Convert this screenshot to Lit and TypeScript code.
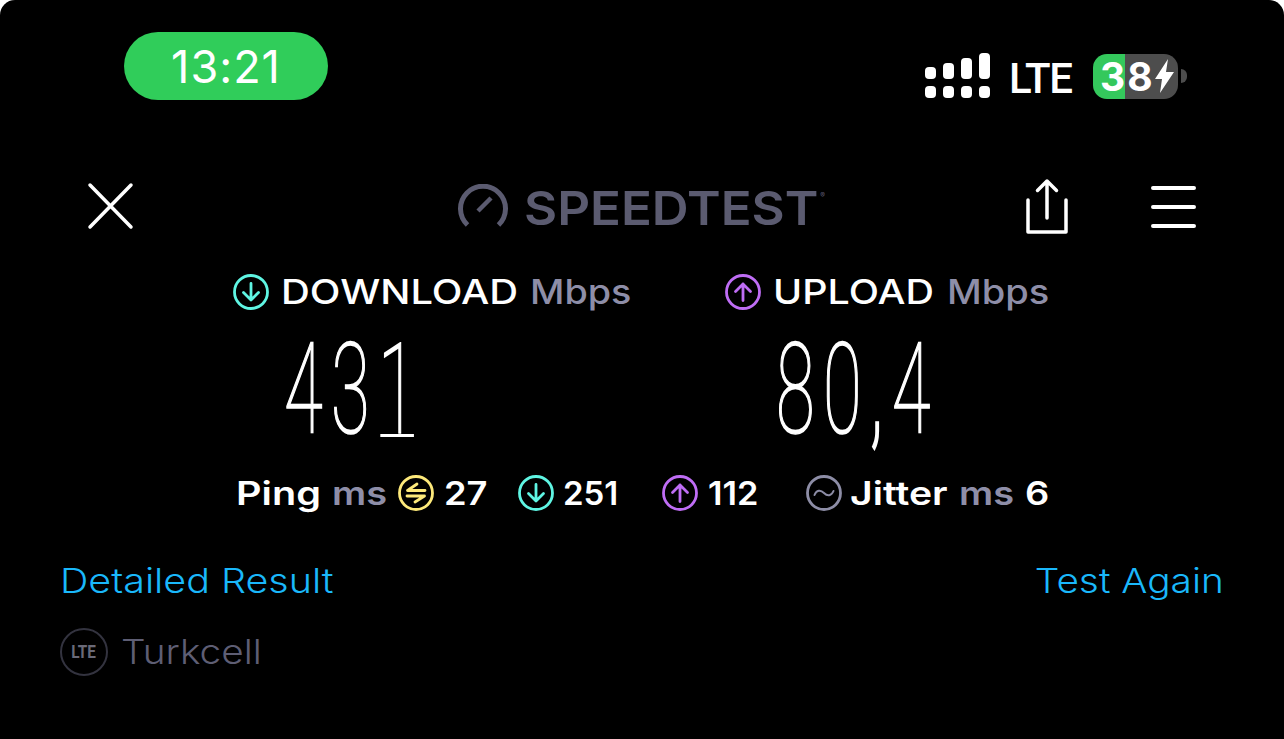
import { LitElement, html, css, svg } from "lit";
import { customElement } from "lit/decorators.js";

const circleIcon = (color: string, inner: unknown) => html`<svg class="ci" viewBox="0 0 36 36" fill="none" stroke=${color} stroke-width="2.8" stroke-linecap="round" stroke-linejoin="round"><circle cx="18" cy="18" r="16.5"></circle>${inner}</svg>`;
const down = svg`<path d="M18 9.500V26M10.500 18.500 18 26l7.500-7.500"></path>`;
const up = svg`<path d="M18 26.500V10M10.500 17.500 18 10l7.500 7.500"></path>`;
const ping = svg`<path d="M27 15.500H9.500L19 9M9 21h17.500L17 27"></path>`;
const wave = svg`<path stroke-width="2" d="M8.500 20c2-5 6-5.500 9.500-2s7.500 3 9.500-2"></path>`;

/* Montserrat is not installed: each label is Inter stretched to the measured width. */
interface Item { x: number; w: number; t?: string; s?: number; dim?: boolean; icon?: unknown; }
const statItems: Item[] = [
  { x: 236, w: 84, t: "Ping", s: 1.2 },
  { x: 332, w: 54, t: "ms", s: 1.15, dim: true },
  { x: 398, w: 36, icon: circleIcon("#fde97a", ping) },
  { x: 444, w: 42, t: "27", s: 1.1 },
  { x: 518, w: 36, icon: circleIcon("#5ff5e3", down) },
  { x: 563, w: 55, t: "251", s: 1.0 },
  { x: 662, w: 36, icon: circleIcon("#bf6df5", up) },
  { x: 708, w: 49, t: "112", s: 1.04 },
  { x: 806, w: 36, icon: circleIcon("#8d8da6", wave) },
  { x: 850, w: 96, t: "Jitter", s: 1.185 },
  { x: 959, w: 54, t: "ms", s: 1.15, dim: true },
  { x: 1025, w: 22, t: "6", s: 1.15 },
];

const headItems = (items: Item[]) => items.map((it, i) => {
  const prev = items[i - 1];
  const ml = prev ? it.x - prev.x - prev.w : 0;
  return html`<span class="cell" style="width:${it.w}px;margin-left:${ml}px">${it.icon ?? html`<span class="wide ${it.dim ? "dim" : ""}" style="transform:scaleX(${it.s})">${it.t}</span>`}</span>`;
});

const dl: Item[] = [
  { x: 233, w: 36, icon: circleIcon("#5ff5e3", down) },
  { x: 281, w: 235, t: "DOWNLOAD", s: 1.175 },
  { x: 530, w: 99, t: "Mbps", s: 1.11, dim: true },
];
const ul: Item[] = [
  { x: 725, w: 36, icon: circleIcon("#bf6df5", up) },
  { x: 773, w: 159, t: "UPLOAD", s: 1.16 },
  { x: 947, w: 100, t: "Mbps", s: 1.12, dim: true },
];

@customElement("app-root")
export class AppRoot extends LitElement {
  static styles = css`
    :host { display: block; width: 1284px; height: 739px; background: #fff; font-family: Inter, "Noto Sans", sans-serif; color: #fff; overflow: hidden; }
    .screen { width: 1284px; height: 739px; background: #000; border-radius: 15px 15px 0 0; box-sizing: border-box; position: relative; }
    .status { display: flex; align-items: center; height: 68px; padding: 32px 0 0 124px; }
    .pill { width: 204px; height: 68px; border-radius: 34px; background: #30cd5a; display: flex; align-items: center; justify-content: center; font-size: 45px; font-weight: 400; line-height: 1; letter-spacing: 1px; }
    .sys { margin-left: 597px; padding-top: 20px; display: flex; align-items: center; }
    .signal { width: 66px; height: 46px; display: block; }
    .lte { width: 63px; margin: 5px 0 0 18px; font-family: Roboto, sans-serif; font-size: 42px; font-weight: 500; letter-spacing: -1.500px; line-height: 1; white-space: nowrap; }
    .batt { margin-left: 21px; width: 85px; height: 45px; border-radius: 14px; overflow: hidden; background: linear-gradient(90deg, #34c85c 0 32px, #4d4d4d 32px); display: flex; align-items: center; padding-left: 7px; box-sizing: border-box; font-size: 39px; font-weight: 700; line-height: 1; position: relative; }
    .batt span { letter-spacing: 2px; }
    .batt svg { width: 21px; height: 34px; margin-left: -1px; }
    .nub { width: 6px; height: 14px; margin-left: 3px; background: #4d4d4d; border-radius: 0 7px 7px 0; }
    .toolbar { display: flex; align-items: center; height: 60px; margin-top: 77px; padding-left: 85px; }
    .toolbar svg { display: block; }
    .x { width: 50px; height: 50px; }
    .logo { display: flex; align-items: center; margin-left: 322px; width: 567px; color: #5b5b70; }
    .gauge { width: 52px; height: 46px; }
    .logo b { display: inline-block; margin-left: 15px; font-size: 47px; font-weight: 600; line-height: 1; transform: scaleX(1.085); transform-origin: left center; }
    .logo sup { font-size: 7px; font-weight: 400; align-self: flex-start; margin: 7px 0 0 25px; }
    .share { width: 46px; height: 58px; }
    .menu { width: 48px; height: 46px; margin-left: 80px; }
    .heads { display: flex; padding: 35px 0 0 233px; font-size: 34px; font-weight: 500; line-height: 40px; white-space: nowrap; }
    .group { display: flex; }
    .group + .group { margin-left: 96px; }
    .cell { display: flex; align-items: center; flex: none; }
    .wide { display: inline-block; transform-origin: left center; }
    .dim { color: #8e8ea8; }
    .ci { width: 36px; height: 36px; display: block; flex: none; }
    .nums { display: grid; grid-template-columns: 492px auto; padding: 23px 0 0 284px; }
    .num { position: relative; font-family: Roboto, sans-serif; font-weight: 100; font-size: 126px; line-height: 110px; letter-spacing: 15px; transform: scaleX(.56); transform-origin: left center; white-space: nowrap; -webkit-text-stroke: 1.700px #fff; }
    .comma { -webkit-text-stroke: 3.500px #fff; }
    .foot { position: absolute; left: 172px; bottom: 8px; width: 60px; height: 3px; background: #fff; }
    .stats { display: flex; align-items: center; padding: 28px 0 0 236px; font-size: 33px; font-weight: 600; line-height: 40px; white-space: nowrap; }
    .links { display: flex; justify-content: space-between; padding: 46px 60px 0; font-size: 34px; font-weight: 350; color: #1ab8fb; line-height: 44px; }
    .links span { display: inline-block; white-space: nowrap; }
    .l1 { transform: scaleX(1.16); transform-origin: left center; }
    .l2 { transform: scaleX(1.14); transform-origin: right center; }
    .carrier { display: flex; align-items: center; gap: 13px; padding: 25px 0 0 60px; font-size: 34px; font-weight: 300; color: #5e5e74; line-height: 48px; }
    .carrier > span { display: inline-block; transform: scaleX(1.14); transform-origin: left center; }
    .ltec { width: 44px; height: 44px; border: 2px solid #33333f; border-radius: 50%; display: flex; align-items: center; justify-content: center; font-family: Roboto, sans-serif; font-size: 18px; font-weight: 700; color: #6a6a78; }
    .ltec span { transform: scaleX(.85); }
  `;

  render() {
    return html`<div class="screen">
      <div class="status">
        <div class="pill">13:21</div>
        <div class="sys">
          <svg class="signal" viewBox="0 0 66 46" fill="#fff">
            <rect x="0" y="14" width="11" height="12" rx="4"></rect>
            <rect x="18" y="10" width="11" height="16" rx="4"></rect>
            <rect x="36" y="5" width="11" height="21" rx="4"></rect>
            <rect x="54" y="0" width="11" height="26" rx="4"></rect>
            <rect x="0" y="33" width="11" height="12" rx="4"></rect>
            <rect x="18" y="33" width="11" height="12" rx="4"></rect>
            <rect x="36" y="33" width="11" height="12" rx="4"></rect>
            <rect x="54" y="33" width="11" height="12" rx="4"></rect>
          </svg>
          <div class="lte">LTE</div>
          <div class="batt"><span>38</span><svg viewBox="0 0 21 34" fill="#fff"><path d="M14 0 1 20h7L6 34 20 13h-8z"></path></svg></div>
          <div class="nub"></div>
        </div>
      </div>
      <div class="toolbar">
        <svg class="x" viewBox="0 0 50 50" fill="none" stroke="#fff" stroke-width="3.500" stroke-linecap="round"><path d="M5 3 46 45M46 3 5 45"></path></svg>
        <div class="logo">
          <svg class="gauge" viewBox="0 0 52 46" fill="none" stroke="currentColor" stroke-width="5" stroke-linecap="butt"><path d="M10.500 41a22.500 22.500 0 1 1 31 0"></path><path d="M21 27l13-13" stroke-width="4.500"></path></svg>
          <b>SPEEDTEST</b><sup>®</sup>
        </div>
        <svg class="share" viewBox="0 0 46 58" fill="none" stroke="#fff" stroke-width="3.500" stroke-linecap="round" stroke-linejoin="round"><path d="M23 3V40M13.500 12.500 23 3l9.500 9.500M4 22V54H42V22"></path></svg>
        <svg class="menu" viewBox="0 0 48 46" fill="none" stroke="#fff" stroke-width="4" stroke-linecap="round"><path d="M3 4H44M3 23H44M3 42H44"></path></svg>
      </div>
      <div class="heads">
        <div class="group">${headItems(dl)}</div>
        <div class="group">${headItems(ul)}</div>
      </div>
      <div class="nums"><div class="num">431<i class="foot"></i></div><div class="num">80<span class="comma">,</span>4</div></div>
      <div class="stats">${headItems(statItems)}</div>
      <div class="links"><span class="l1">Detailed Result</span><span class="l2">Test Again</span></div>
      <div class="carrier"><div class="ltec"><span>LTE</span></div><span>Turkcell</span></div>
    </div>`;
  }
}
